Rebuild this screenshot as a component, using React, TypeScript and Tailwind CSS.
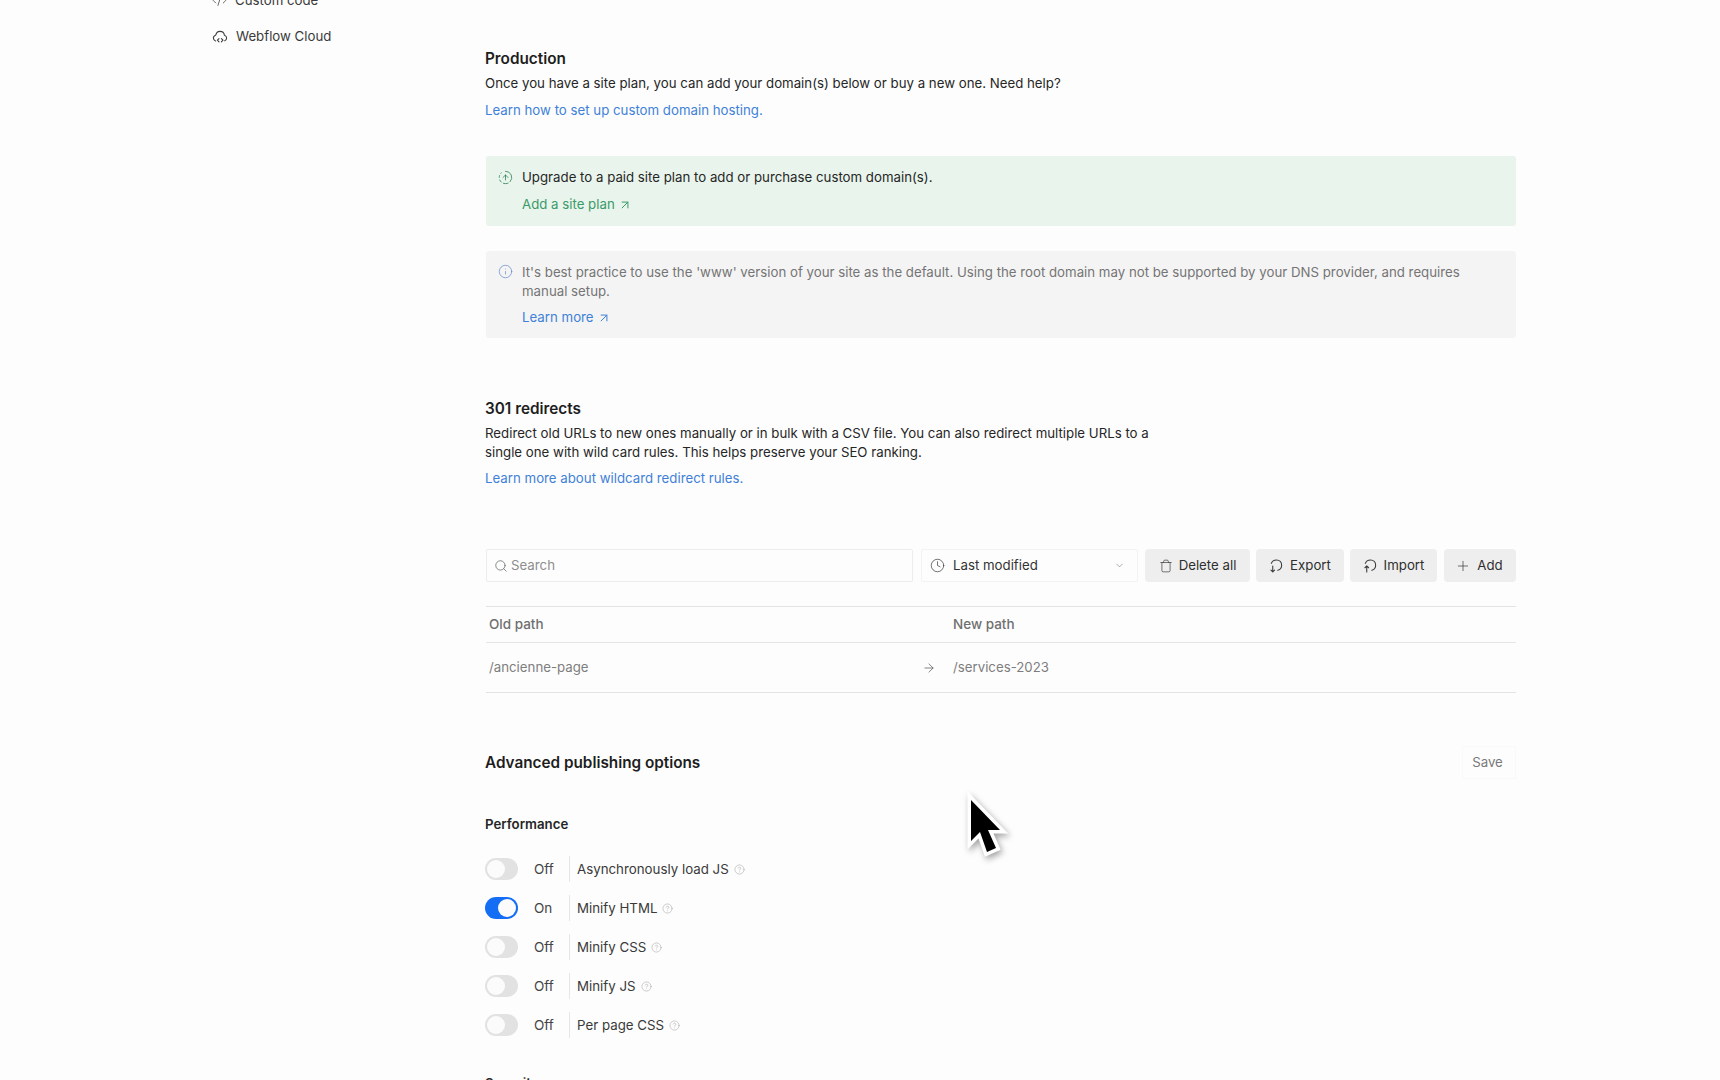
import { ArrowRight, ArrowUpRight, ChevronDown, CircleFadingArrowUp, CircleHelp, Clock, CodeXml, Info, Plus, Search, Trash } from "lucide-react";

function CloudIcon() {
  return (
    <svg width="16" height="16" viewBox="0 0 16 16" fill="none" stroke="#3f3f3f" strokeWidth="1.1" strokeLinecap="round" strokeLinejoin="round">
      <path d="M3.600 12C2.200 11.600 1.400 10.400 1.400 9c0-1.400 1-2.500 2.300-2.800C4.200 4 5.900 2.400 8 2.400c2.300 0 4.100 1.700 4.400 3.800 1.300.4 2.200 1.500 2.200 2.800 0 1.300-.8 2.400-1.900 2.800" />
      <path d="M7 9.600 5.400 11.200 7 12.800M9.400 9.600 11 11.200 9.400 12.800" />
    </svg>
  );
}

function TransferIcon({ up }: { up?: boolean }) {
  return (
    <svg width="15" height="15" viewBox="0 0 14 14" fill="none" stroke="#3a3a3a" strokeWidth="1" strokeLinecap="round" strokeLinejoin="round">
      <path d="M2.200 5C2.800 3 4.700 1.800 7 1.800c2.800 0 4.800 2.100 4.800 4.900 0 2.300-1.400 4.100-3.600 4.800" />
      {up ? <path d="M3.500 13V7.400M1.800 9.100 3.500 7.400 5.200 9.100" /> : <path d="M3.500 7.400V13M1.800 11.300 3.500 13 5.200 11.300" />}
    </svg>
  );
}

function Cursor() {
  return (
    <svg className="absolute left-[960px] top-[790px] [filter:drop-shadow(2px_3px_3px_rgba(0,0,0,0.35))]" width="60" height="80" viewBox="0 0 60 80">
      <path d="M11 10 L11 51 L20 42 L27 62 L36 58 L28 40 L40 40 Z" fill="#000" stroke="#fff" strokeWidth="7" strokeLinejoin="miter" paintOrder="stroke" />
    </svg>
  );
}

function ToolButton({ icon, label, width }: { icon: React.ReactNode; label: string; width: string }) {
  return (
    <button className={`flex h-[33px] items-center justify-center gap-[6px] rounded-[4px] bg-[#eeeeee] text-[13.250px] text-[#2e2e2e] ${width}`}>
      {icon}
      {label}
    </button>
  );
}

function Toggle({ on, status, label }: { on?: boolean; status: string; label: string }) {
  return (
    <div className="flex h-[26px] items-center">
      <div className={`flex h-[22px] w-[33px] items-center rounded-full px-[2px] ${on ? "justify-end bg-[#146ef5]" : "justify-start bg-[#e2e2e2]"}`}>
        <div className="h-[18px] w-[18px] rounded-full bg-[#fbfbfb]" />
      </div>
      <span className="ml-[16px] w-[35px] text-[13.500px] text-[#444444]">{status}</span>
      <div className="h-[26px] w-px bg-[#e6e6e6]" />
      <span className="ml-[7px] text-[13.300px] text-[#3a3a3a]">{label}</span>
      <CircleHelp size={11} strokeWidth={1.1} className="ml-[5px] text-[#a0a0a0]" />
    </div>
  );
}

export default function App() {
  return (
    <div className="relative flex h-screen w-full overflow-hidden bg-[#fdfdfd] [font-family:Inter,sans-serif] text-[13.250px] leading-[19px]">
      <aside className="w-[485px] shrink-0 pl-[212px] pt-0">
        <div className="-mt-[9px] flex h-[19px] items-center gap-[8px] text-[#3a3a3a]">
          <CodeXml size={15} strokeWidth={1.2} />
          <span>Custom code</span>
        </div>
        <div className="mt-[17px] flex h-[19px] items-center gap-[8px] text-[#3a3a3a]">
          <CloudIcon />
          <span>Webflow Cloud</span>
        </div>
      </aside>

      <main className="w-[1031px] shrink-0">
        <section className="pt-[49px]">
          <h2 className="text-[15.300px] font-semibold leading-[20px] text-[#1e1e1e]">Production</h2>
          <p className="mt-[5px] text-[#262626]">Once you have a site plan, you can add your domain(s) below or buy a new one. Need help?</p>
          <a className="mt-[8px] block text-[#3f81d8]">Learn how to set up custom domain hosting.</a>
        </section>

        <div className="ml-px mt-[36px] flex h-[70px] gap-[9px] rounded-[3px] bg-[#e8f4ec] pl-[12px] pt-[12px]">
          <CircleFadingArrowUp size={15} strokeWidth={1.2} className="mt-[2px] text-[#237a4c]" />
          <div>
            <p className="text-[#262626]">Upgrade to a paid site plan to add or purchase custom domain(s).</p>
            <a className="mt-[8px] flex items-center gap-[3px] text-[#3a9a68]">Add a site plan <ArrowUpRight size={14} strokeWidth={1.7} /></a>
          </div>
        </div>

        <div className="ml-px mt-[25px] flex h-[87px] gap-[9px] rounded-[3px] bg-[#f4f4f4] pl-[12px] pt-[12px]">
          <Info size={15} strokeWidth={1.1} className="mt-[1px] shrink-0 text-[#5f86c4]" />
          <div className="w-[985px]">
            <p className="text-[#757575]">It's best practice to use the 'www' version of your site as the default. Using the root domain may not be supported by your DNS provider, and requires manual setup.</p>
            <a className="mt-[7px] flex items-center gap-[3px] text-[#3f81d8]">Learn more <ArrowUpRight size={14} strokeWidth={1.7} /></a>
          </div>
        </div>

        <section className="pt-[61px]">
          <h2 className="text-[15.300px] font-semibold leading-[20px] text-[#1e1e1e]">301 redirects</h2>
          <p className="mt-[5px] w-[680px] text-[#262626]">Redirect old URLs to new ones manually or in bulk with a CSV file. You can also redirect multiple URLs to a single one with wild card rules. This helps preserve your SEO ranking.</p>
          <a className="mt-[7px] block text-[#3f81d8]">Learn more about wildcard redirect rules.</a>
        </section>

        <div className="ml-px mt-[61px] flex items-center">
          <div className="flex h-[33px] w-[427px] items-center gap-[3px] rounded-[2px] border border-[#ececec] pl-[7px] text-[#8e8e8e]">
            <Search size={14} strokeWidth={1.3} className="text-[#666666]" />
            Search
          </div>
          <div className="ml-[8px] flex h-[33px] w-[217px] items-center rounded-[2px] border border-[#f3f3f3] pl-[8px] pr-[12px] text-[#333333]">
            <Clock size={15} strokeWidth={1.1} />
            <span className="ml-[8px]">Last modified</span>
            <ChevronDown size={11} strokeWidth={1.3} className="ml-auto text-[#777777]" />
          </div>
          <ToolButton width="ml-[7px] w-[105px]" label="Delete all" icon={<Trash size={14} strokeWidth={1.1} />} />
          <ToolButton width="ml-[6px] w-[88px]" label="Export" icon={<TransferIcon />} />
          <ToolButton width="ml-[6px] w-[87px]" label="Import" icon={<TransferIcon up />} />
          <ToolButton width="ml-[7px] w-[72px] pr-[2px]" label="Add" icon={<Plus size={16} strokeWidth={1} />} />
        </div>

        <div className="ml-px mt-[24px] border-t border-[#e3e3e3]">
          <div className="flex h-[36px] items-center border-b border-[#e6e6e6] pl-[3px] text-[13.500px] font-medium text-[#6f6f6f]">
            <span className="w-[464px]">Old path</span>
            <span>New path</span>
          </div>
          <div className="flex h-[50px] items-center border-b border-[#e3e3e3] pl-[3px] text-[#7e7e7e]">
            <span className="w-[433px]">/ancienne-page</span>
            <ArrowRight size={14} strokeWidth={1.1} className="text-[#444444]" />
            <span className="ml-[17px]">/services-2023</span>
          </div>
        </div>

        <div className="mt-[53px] flex h-[33px] items-center justify-between">
          <h2 className="text-[15.300px] font-semibold text-[#1e1e1e]">Advanced publishing options</h2>
          <button className="flex h-[33px] w-[54px] items-center justify-center rounded-[2px] border border-[#f9f9f9] pr-[3px] text-[#7a7a7a]">Save</button>
        </div>

        <h3 className="mt-[36px] font-semibold leading-[19px] text-[#262626]">Performance</h3>

        <div className="mt-[22px] flex flex-col gap-[13px]">
          <Toggle status="Off" label="Asynchronously load JS" />
          <Toggle on status="On" label="Minify HTML" />
          <Toggle status="Off" label="Minify CSS" />
          <Toggle status="Off" label="Minify JS" />
          <Toggle status="Off" label="Per page CSS" />
        </div>

        <h3 className="mt-[36px] font-semibold leading-[19px] text-[#262626]">Security</h3>
      </main>

      <Cursor />
    </div>
  );
}
